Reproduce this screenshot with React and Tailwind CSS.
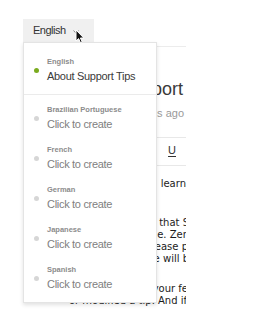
const languages = ["Brazilian Portuguese", "French", "German", "Japanese", "Spanish"];

function LangItem({ label, text, active }) {
  return (
    <div className="flex items-center">
      <span
        className={`mr-[8px] h-[5px] w-[5px] shrink-0 rounded-full ${
          active ? "bg-[#7aab1e]" : "bg-[#d6d6d6]"
        }`}
      />
      <div className="flex flex-col">
        <span className="text-[7.5px] font-bold leading-[10px] text-[#8c8c8c]">{label}</span>
        <span
          className={`mt-[2px] text-[11px] leading-[15px] tracking-[-0.3px] ${
            active ? "text-[#3a3a3a]" : "text-[#808080]"
          }`}
        >
          {text}
        </span>
      </div>
    </div>
  );
}

function Line({ children, shift = "" }) {
  return (
    <p className="flex justify-end whitespace-nowrap leading-[12px]">
      <span className={shift}>{children}</span>
    </p>
  );
}

export default function App() {
  return (
    <div className="relative h-[315px] w-[259px] overflow-hidden bg-white">
      {/* Language button */}
      <div className="ml-[23px] mt-[19px] flex h-[23px] w-[71px] items-center bg-[#f0f0f0] pl-[10px] font-['Liberation_Sans',sans-serif] text-[11px] tracking-[-0.5px] text-[#333]">
        <span>English</span>
        <svg className="ml-[7px] mt-[2px]" width="6" height="4" viewBox="0 0 6 4">
          <path d="M0.5 0.5 L3 3.2 L5.5 0.5" fill="none" stroke="#8a8a8a" strokeWidth="1" />
        </svg>
      </div>

      {/* Article behind the menu */}
      <article className="ml-[68px] mt-[4px] w-[118px] overflow-hidden border-t border-[#ececec]">
        <h1 className="mt-[31px] flex justify-end whitespace-nowrap pr-[3px] font-['Liberation_Sans',sans-serif] text-[18px] leading-[22px] text-[#3a3a3a]">
          Support
        </h1>
        <p className="mt-[6px] flex justify-end whitespace-nowrap pr-[2px] font-['Liberation_Sans',sans-serif] text-[11px] leading-[14px] text-[#9a9a9a]">
          mins ago
        </p>

        <div className="mt-[17px] flex h-[29px] items-center justify-end border-y border-[#e8e8e8] pb-[3px] pr-[10px] font-['Liberation_Sans',sans-serif] text-[11px] text-[#333]">
          <span className="underline underline-offset-[2px]">U</span>
        </div>

        <div className="font-['DejaVu_Sans',sans-serif] text-[10px] text-[#1c1c1c]">
          <div className="mt-[12px]">
            <Line>learn</Line>
          </div>
          <div className="mt-[27px]">
            <Line shift="-mr-[3px]">that S</Line>
            <Line shift="-mr-[3px]">ble. Zen</Line>
            <Line shift="-mr-[2px]">Please p</Line>
            <Line shift="-mr-[3px]">we will b</Line>
          </div>
          <div className="mt-[18px]">
            <Line shift="-mr-[2px]">your fe</Line>
            <Line shift="-mr-[1px]">or modified a tip. And if</Line>
          </div>
        </div>
      </article>

      {/* Language menu */}
      <div className="absolute left-[23px] top-[42px] h-[261px] w-[134px] border border-[#e4e4e4] bg-white font-['Liberation_Sans',sans-serif] shadow-[0_2px_4px_rgba(0,0,0,0.12)]">
        <div className="border-b border-[#ebebeb] pb-[10px] pl-[10px] pt-[14px]">
          <LangItem label="English" text="About Support Tips" active />
        </div>
        <div className="flex flex-col gap-[13px] pl-[10px] pt-[10px]">
          {languages.map((lang) => (
            <LangItem key={lang} label={lang} text="Click to create" />
          ))}
        </div>
      </div>

      {/* Mouse pointer */}
      <svg className="absolute left-[75px] top-[29px]" width="10" height="15" viewBox="0 0 10 15">
        <path
          d="M1 1 L1 12 L3.6 9.6 L5.4 13.6 L7.2 12.8 L5.4 9 L8.8 9 Z"
          fill="#111"
          stroke="#fff"
          strokeWidth="1"
          strokeLinejoin="round"
        />
      </svg>
    </div>
  );
}
